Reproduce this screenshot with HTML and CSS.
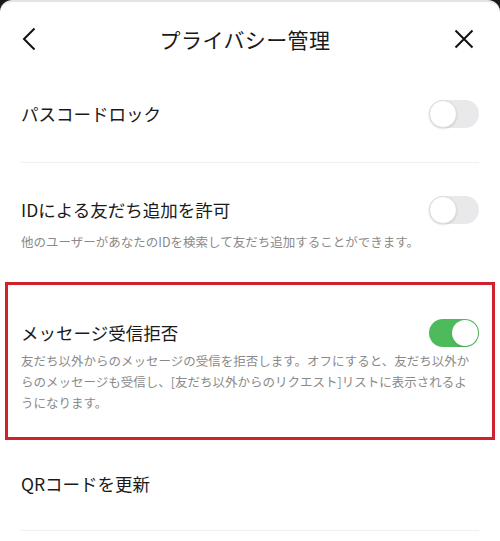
FILE: index.html
```html
<!DOCTYPE html>
<html lang="ja">
<head>
<meta charset="utf-8">
<link rel="stylesheet" href="styles.css">
</head>
<body>
<div class="sheet">
  <header class="header">
    <svg class="icon-back" width="14" height="24" viewBox="0 0 14 24"><path d="M12.5 1.5 L2 12 L12.5 22.5" fill="none" stroke="#111" stroke-width="2"/></svg>
    <h1 class="title">プライバシー管理</h1>
    <svg class="icon-close" width="20" height="20" viewBox="0 0 20 20"><path d="M1.5 1.5 L18.5 18.5 M18.5 1.5 L1.5 18.5" fill="none" stroke="#111" stroke-width="2"/></svg>
  </header>

  <section class="row row-first">
    <div class="row-head">
      <span class="label">パスコードロック</span>
      <span class="toggle"><span class="knob"></span></span>
    </div>
  </section>
  <div class="divider"></div>

  <section class="row row-second">
    <div class="row-head">
      <span class="label">IDによる友だち追加を許可</span>
      <span class="toggle"><span class="knob"></span></span>
    </div>
    <p class="desc">他のユーザーがあなたのIDを検索して友だち追加することができます。</p>
  </section>

  <div class="highlight">
    <section class="row row-third">
      <div class="row-head">
        <span class="label">メッセージ受信拒否</span>
        <span class="toggle on"><span class="knob"></span></span>
      </div>
      <p class="desc">友だち以外からのメッセージの受信を拒否します。オフにすると、友だち以外か<br>らのメッセージも受信し、[友だち以外からのリクエスト]リストに表示されるよ<br>うになります。</p>
    </section>
  </div>

  <section class="row row-fourth">
    <div class="row-head">
      <span class="label">QRコードを更新</span>
    </div>
  </section>
  <div class="divider"></div>
</div>
</body>
</html>
```

FILE: styles.css
```css
html, body {
  margin: 0;
  padding: 0;
  background: #1a1a1a;
}
body {
  width: 500px;
  height: 541px;
  overflow: hidden;
  font-family: "Noto Sans CJK JP", "Noto Sans", sans-serif;
  color: #111;
}
.sheet {
  background: #fff;
  height: 541px;
  border-radius: 12px 12px 0 0;
  border-top: 2px solid #e4e4e4;
  box-sizing: border-box;
}
.header {
  height: 74px;
  display: flex;
  align-items: center;
  justify-content: space-between;
  padding: 0 26px 0 22px;
}
.title {
  margin: 0;
  font-size: 21px;
  font-weight: 400;
  line-height: 24px;
  letter-spacing: 0.4px;
  color: #1a1a1a;
}
.row {
  padding: 0 21px;
}
.row-head {
  display: flex;
  align-items: center;
  justify-content: space-between;
  height: 24px;
}
.label {
  font-size: 17.5px;
  line-height: 24px;
  color: #1a1a1a;
}
.desc {
  margin: 0;
  font-size: 12.5px;
  line-height: 21px;
  color: #8a8a8a;
  white-space: nowrap;
}
.row-first { padding-top: 26px; padding-bottom: 36px; }
.row-second { padding-top: 35px; }
.row-second .desc { margin-top: 8.5px; }
.divider {
  height: 1px;
  background: #f0f0f0;
  margin: 0 21px;
}
.highlight {
  margin: 30px 5px 0;
  border: 3px solid #d1212e;
}
.row-third {
  padding: 36px 13px 24px;
}
.row-third .desc { margin-top: 5.5px; }
.row-fourth { padding-top: 32px; padding-bottom: 34px; }

.toggle {
  position: relative;
  width: 50px;
  height: 28px;
  border-radius: 14px;
  background: #e9e9eb;
  flex: none;
}
.knob {
  position: absolute;
  left: 0;
  top: 0;
  width: 28px;
  height: 28px;
  box-sizing: border-box;
  border-radius: 50%;
  background: #fff;
  border: 1px solid #dcdcdc;
  box-shadow: 0 1px 2px rgba(0,0,0,0.12);
}
.toggle.on {
  background: #4dbb5b;
}
.toggle.on .knob {
  left: auto;
  right: 1px;
  top: 1px;
  width: 26px;
  height: 26px;
  border: none;
}
```
